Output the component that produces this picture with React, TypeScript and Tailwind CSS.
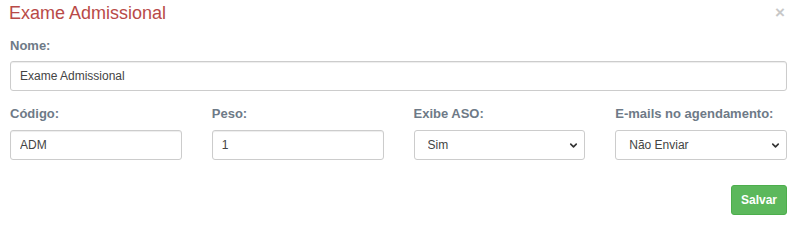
import { ChevronDown } from "lucide-react";

const font = { fontFamily: '"Liberation Sans", Arial, sans-serif' };

function Label({ children }: { children: string }) {
  return (
    <label className="block h-[19px] text-[13px] leading-[19px] font-bold text-[#6e7a87]">
      {children}
    </label>
  );
}

function TextField({ value }: { value: string }) {
  return (
    <input
      readOnly
      value={value}
      className="block h-[30px] w-full rounded-[3px] border border-[#cccccc] bg-white px-[9px] text-[12px] text-[#444444] shadow-[inset_0_1px_1px_rgba(0,0,0,0.075)] outline-none"
    />
  );
}

function SelectField({ value }: { value: string }) {
  return (
    <div className="relative">
      <select
        defaultValue={value}
        className="block h-[30px] w-full appearance-none rounded-[3px] border border-[#cccccc] bg-white pl-[13px] pr-[24px] text-[12px] text-[#444444] outline-none"
      >
        <option>{value}</option>
      </select>
      <ChevronDown
        size={11}
        strokeWidth={3.5}
        className="pointer-events-none absolute right-[6px] top-[10px] text-[#333333]"
      />
    </div>
  );
}

export default function App() {
  return (
    <div className="h-[222px] w-[795px] bg-white pl-[10px] pr-[8px] pt-[3px]" style={font}>
      {/* Header */}
      <div className="flex items-start justify-between">
        <h4 className="-ml-[1px] h-[20px] text-[18px] leading-[20px] text-[#b94a48]">
          Exame Admissional
        </h4>
        <button className="mr-[2px] mt-[1px] text-[17px] leading-[17px] font-bold text-[#c8c8c8]">
          ×
        </button>
      </div>

      {/* Nome */}
      <div className="mt-[13px]">
        <Label>Nome:</Label>
        <div className="mt-[6px]">
          <TextField value="Exame Admissional" />
        </div>
      </div>

      {/* Linha 2 */}
      <div className="mt-[13px] grid grid-cols-4 gap-x-[30px]">
        <div>
          <Label>Código:</Label>
          <div className="mt-[7px]">
            <TextField value="ADM" />
          </div>
        </div>
        <div>
          <Label>Peso:</Label>
          <div className="mt-[7px]">
            <TextField value="1" />
          </div>
        </div>
        <div>
          <Label>Exibe ASO:</Label>
          <div className="mt-[7px]">
            <SelectField value="Sim" />
          </div>
        </div>
        <div>
          <Label>E-mails no agendamento:</Label>
          <div className="mt-[7px]">
            <SelectField value="Não Enviar" />
          </div>
        </div>
      </div>

      {/* Ações */}
      <div className="mt-[25px] flex justify-end">
        <button className="h-[30px] rounded-[3px] border border-[#4cae4c] bg-[#5cb85c] px-[9px] text-[12px] font-bold text-white">
          Salvar
        </button>
      </div>
    </div>
  );
}
